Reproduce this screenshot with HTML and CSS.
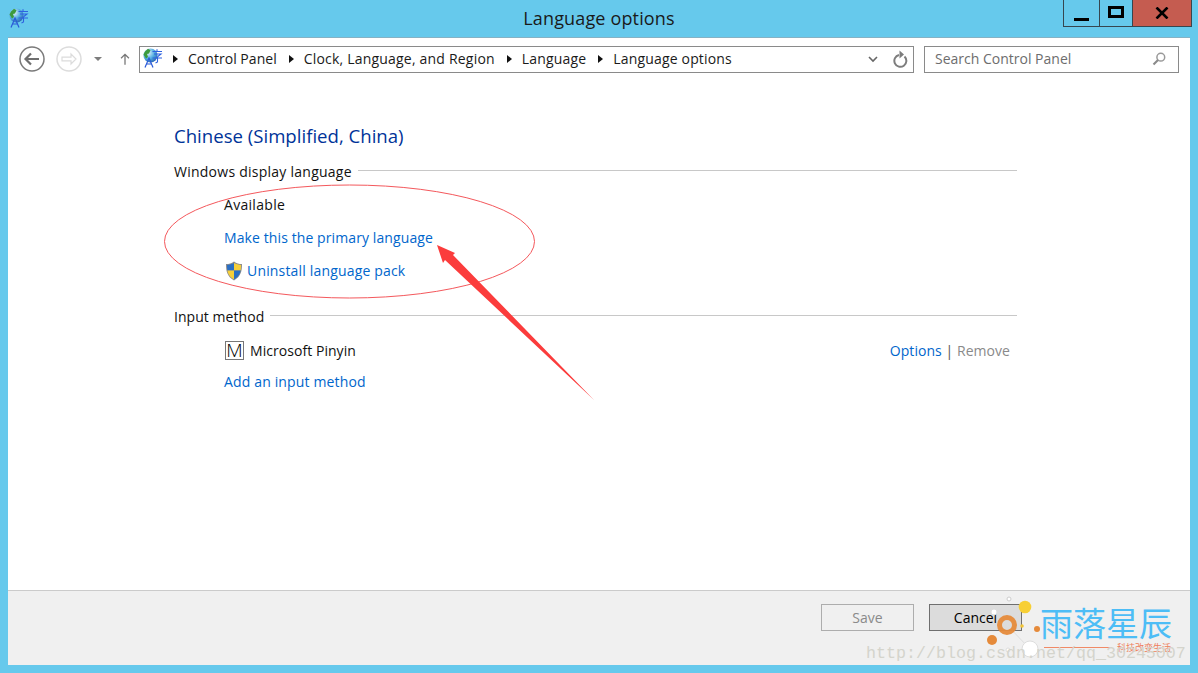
FILE: index.html
```html
<!DOCTYPE html>
<html lang="en">
<head>
<meta charset="utf-8">
<title>Language options</title>
<link rel="stylesheet" href="styles.css">
</head>
<body>
<svg class="defs" width="0" height="0" aria-hidden="true">
  <defs>
    <radialGradient id="globe" cx="35%" cy="30%" r="75%">
      <stop offset="0" stop-color="#e4f3fb"/>
      <stop offset=".55" stop-color="#54afe2"/>
      <stop offset="1" stop-color="#2a66b4"/>
    </radialGradient>
    <symbol id="langicon" viewBox="0 0 20 20">
      <circle cx="7.500" cy="7.500" r="7" fill="url(#globe)"/>
      <path d="M2 3.500l3-2.700 2.500 1.500-1.500 3.200-2 .5 1 3-2 1.500-2.500-4z" fill="#3d9b3d"/>
      <path d="M9.500 3.500h9.500M14 1.200v2.300M11 6h7l-3.500 2.700M9.500 10h9.500M14.500 8.800v5.200l-2 1" fill="none" stroke="#2f62e0" stroke-width="1.100"/>
      <path d="M2 19.500L6 10l4 9.500M3.500 16h5" fill="none" stroke="#2a5ad8" stroke-width="1.200"/>
    </symbol>
  </defs>
</svg>

<div class="window">
  <header class="titlebar">
    <svg class="title-icon" width="20" height="20"><use href="#langicon"/></svg>
    <h1 class="title">Language options</h1>
    <div class="caption">
      <div class="cap cap-min"><span class="min-glyph"></span></div>
      <div class="cap cap-max"><span class="max-glyph"></span></div>
      <div class="cap cap-close">
        <svg width="14" height="12" viewBox="0 0 14 12"><path d="M1.500 .5L12.500 11.500M12.500 .5L1.500 11.500" stroke="#000" stroke-width="2.600" fill="none"/></svg>
      </div>
    </div>
  </header>

  <div class="client">
    <nav class="navbar">
      <svg class="nav-btn" width="28" height="28" viewBox="0 0 28 28">
        <circle cx="14" cy="14" r="12" fill="none" stroke="#7a7a7a" stroke-width="1.500"/>
        <path d="M21 14H8M13 8.500L7.500 14l5.500 5.500" fill="none" stroke="#6f6f6f" stroke-width="2.200"/>
      </svg>
      <svg class="nav-btn nav-fwd" width="28" height="28" viewBox="0 0 28 28">
        <circle cx="14" cy="14" r="12" fill="none" stroke="#dcdcdc" stroke-width="1.500"/>
        <path d="M7 12.200h9V9l5 5-5 5v-3.200H7z" fill="none" stroke="#dcdcdc" stroke-width="1.200"/>
      </svg>
      <span class="nav-drop"></span>
      <svg class="nav-up" width="14" height="18" viewBox="0 0 14 18">
        <path d="M7 17V2.500M1.500 8L7 2.500 12.500 8" fill="none" stroke="#777" stroke-width="1.800"/>
      </svg>
      <div class="address">
        <svg class="addr-icon" width="20" height="20"><use href="#langicon"/></svg>
        <span class="crumb-arrow"></span><span class="crumb crumb-first">Control Panel</span>
        <span class="crumb-arrow"></span><span class="crumb crumb-wide">Clock, Language, and Region</span>
        <span class="crumb-arrow"></span><span class="crumb">Language</span>
        <span class="crumb-arrow"></span><span class="crumb">Language options</span>
        <svg class="addr-chev" width="10" height="7" viewBox="0 0 10 7"><path d="M1 1l4 4 4-4" fill="none" stroke="#666" stroke-width="1.600"/></svg>
        <svg class="addr-refresh" width="16" height="18" viewBox="0 0 16 18">
          <path d="M12.500 6.500A6 6 0 1 1 7 5" fill="none" stroke="#7d7d7d" stroke-width="2"/>
          <path d="M7.500 .5v8l4.500-4z" fill="#7d7d7d"/>
        </svg>
      </div>
      <div class="search">
        <span class="search-text">Search Control Panel</span>
        <svg width="14" height="14" viewBox="0 0 14 14">
          <circle cx="8.800" cy="5.200" r="3.900" fill="none" stroke="#999" stroke-width="1.500"/>
          <path d="M6 8L1.500 12.500" stroke="#8a8a8a" stroke-width="2.200"/>
        </svg>
      </div>
    </nav>

    <main class="main">
      <h2 class="lang-title">Chinese (Simplified, China)</h2>

      <div class="group-head group-display"><span>Windows display language</span><i class="rule"></i></div>
      <div class="indent">
        <div class="row-avail">Available</div>
        <div class="row-link"><a class="link">Make this the primary language</a></div>
        <div class="row-link row-shield">
          <svg width="18" height="20" viewBox="0 0 18 20">
            <path d="M9 .5c2.500 1.800 5 2.500 8 2.600 0 7-1 12.500-8 16.400C2 15.600 1 10.100 1 3.100 4 3 6.500 2.300 9 .5z" fill="#8c8c8c"/>
            <path d="M9 2v7.500h6.600c.3-1.700.4-3.700.4-5.500-2.700-.2-5-.9-7-2z" fill="#f6cf3a"/>
            <path d="M9 2C7 3.100 4.700 3.800 2 4c0 1.800.1 3.800.4 5.500H9z" fill="#2a6fc4"/>
            <path d="M2.400 9.500C3 13 4.600 16 9 18.300V9.500z" fill="#f6cf3a"/>
            <path d="M9 9.500v8.800c4.400-2.300 6-5.300 6.600-8.800z" fill="#2a6fc4"/>
          </svg>
          <a class="link">Uninstall language pack</a>
        </div>
      </div>

      <div class="group-head group-input"><span>Input method</span><i class="rule"></i></div>
      <div class="indent">
        <div class="row-method">
          <span class="ime">M</span>
          <span class="ime-name">Microsoft Pinyin</span>
          <span class="ime-actions"><a class="link">Options</a> <b class="sep">|</b> <span class="muted">Remove</span></span>
        </div>
        <div class="row-add"><a class="link">Add an input method</a></div>
      </div>
    </main>

    <footer class="footer">
      <button class="btn btn-save" type="button">Save</button>
      <button class="btn btn-cancel" type="button">Cancel</button>
    </footer>
  </div>
</div>

<svg class="annotation" width="440" height="230" viewBox="160 180 440 230" aria-hidden="true">
  <ellipse cx="349.500" cy="241.500" rx="185" ry="56.500" fill="none" stroke="#f4585c" stroke-width="1"/>
  <path d="M437 245L455 253 453 255 594 400 445 260 443 263z" fill="#fb3c3c"/>
</svg>

<div class="watermark" aria-hidden="true">
  <svg class="wm-dots" width="80" height="72" viewBox="0 0 80 72">
    <path d="M25 32L43 14M25 32L48 56" stroke="#ddd" stroke-width="1" fill="none"/>
    <circle cx="43" cy="14" r="6.300" fill="#f7cf35"/>
    <circle cx="27" cy="6" r="2" fill="#fff" stroke="#ccc"/>
    <circle cx="12" cy="19" r="3" fill="#fff" stroke="#ddd"/>
    <circle cx="25" cy="32" r="7.500" fill="none" stroke="#e58a3a" stroke-width="5" opacity=".95"/>
    <circle cx="10" cy="47" r="5" fill="#e58a3a"/>
    <circle cx="40" cy="33" r="1.800" fill="#f2c536"/>
    <circle cx="55" cy="36" r="3" fill="#e58a3a"/>
    <circle cx="48" cy="56" r="8" fill="#fff" stroke="#ddd"/>
    <circle cx="26" cy="57" r="2" fill="#fff" stroke="#ddd"/>
  </svg>
  <span class="wm-brand">雨落星辰</span>
  <span class="wm-line"></span>
  <span class="wm-slogan">科技改变生活</span>
  <span class="wm-url">http://blog.csdn.net/qq_30245007</span>
</div>
</body>
</html>
```
FILE: styles.css
```css
* { box-sizing: border-box; }
html, body { margin: 0; padding: 0; height: 100%; overflow: hidden; }
body {
  position: relative;
  background: #66c9ec;
  font-family: "Open Sans", "Noto Sans", sans-serif;
  font-size: 14px;
  color: #000;
}
.defs { position: absolute; }
.window { display: flex; flex-direction: column; height: 673px; padding: 0 8px 8px; }

.titlebar { position: relative; flex: 0 0 37px; display: flex; justify-content: center; }
.title-icon { position: absolute; left: 1px; top: 8px; }
.title { margin: 0; font-size: 18px; font-weight: 400; letter-spacing: .15px; line-height: 37px; color: #1a1a1a; }
.caption { position: absolute; right: -2px; top: 0; display: flex; height: 27px; border: 1px solid #36464f; border-top: 0; }
.cap { display: flex; align-items: center; justify-content: center; }
.cap-min { width: 36px; border-right: 1px solid #36464f; }
.cap-max { width: 33px; border-right: 1px solid #36464f; }
.cap-close { width: 58px; background: #c55c50; }
.min-glyph { width: 15px; height: 3px; background: #000; margin-top: 12px; }
.max-glyph { width: 16px; height: 12px; border: 3px solid #000; margin-top: -2px; }

.client { flex: 1; min-height: 0; display: flex; flex-direction: column; background: #fff; border-top: 1px solid #86b2c4; }

.navbar { flex: 0 0 34px; display: flex; align-items: center; padding: 7px 11px 0 10px; }
.nav-btn { flex: none; }
.nav-fwd { margin-left: 9px; }
.nav-drop { margin-left: 11px; width: 0; height: 0; border: 4px solid transparent; border-top-color: #7d7d7d; border-bottom: 0; }
.nav-up { margin-left: 18px; margin-right: 9px; }
.address {
  width: 775px; height: 27px; flex: none; display: flex; align-items: center;
  border: 1px solid #8a8a8a; padding: 0 4px 0 3px;
}
.addr-icon { margin-right: 10px; margin-top: -2px; }
.crumb-arrow { width: 0; height: 0; border: 4.500px solid transparent; border-left: 5px solid #111; border-right: 0; margin-right: 10px; }
.crumb { margin-right: 12px; padding-bottom: 2px; letter-spacing: .17px; white-space: nowrap; color: #1a1a1a; }
.crumb-first { letter-spacing: .03px; }
.crumb-wide { letter-spacing: .2px; }
.addr-chev { margin-left: auto; margin-right: 14px; }
.addr-refresh { margin-right: 1px; }
.search {
  width: 255px; height: 27px; flex: none; margin-left: 10px; display: flex; align-items: center;
  justify-content: space-between; border: 1px solid #8a8a8a; padding: 0 12px 0 10px; color: #6d6d6d;
}
.search-text { padding-bottom: 2px; }

.main { flex: 1; min-height: 0; padding: 29px 173px 0 166px; }
.lang-title { margin: 0; padding-top: 19px; font-size: 18.600px; font-weight: 400; line-height: 30px; color: #003399; }
.group-head { display: flex; align-items: center; gap: 6px; height: 24px; color: #111; }
.group-display { margin-top: 8px; letter-spacing: .25px; }
.group-input { margin-top: 17px; letter-spacing: .05px; }
.group-head span { white-space: nowrap; }
.rule { flex: 1; height: 1px; background: #c8c8c8; margin-top: -1px; }
.indent { padding-left: 50px; }
.row-avail { height: 33px; line-height: 33px; margin-top: 5px; letter-spacing: .3px; color: #111; }
.row-link { height: 33px; line-height: 33px; letter-spacing: .1px; }
.row-shield { display: flex; align-items: center; gap: 4px; padding-left: 1px; letter-spacing: .17px; }
.row-shield svg { flex: none; }
.link { color: #0066cc; white-space: nowrap; }
.row-method { display: flex; align-items: center; height: 30px; margin-top: 7px; padding-right: 7px; }
.ime {
  width: 19px; height: 19px; flex: none; border: 1px solid #777; margin-left: 1px; margin-right: 6px;
  display: flex; align-items: center; justify-content: center; font-size: 19px; font-weight: 300; line-height: 1; color: #000;
}
.ime-name { color: #111; letter-spacing: .05px; }
.ime-actions { margin-left: auto; letter-spacing: .05px; }
.sep { font-weight: 400; color: #555; }
.muted { color: #8a8a8a; }
.row-add { height: 30px; line-height: 30px; margin-top: 2px; letter-spacing: .15px; }

.footer {
  flex: 0 0 75px; display: flex; justify-content: flex-end; gap: 15px; align-items: flex-start;
  padding: 13px 168px 0 0; background: #f0f0f0; border-top: 1px solid #cbcbcb;
}
.btn { width: 93px; height: 27px; font: inherit; padding: 0; background: #f0f0f0; }
.btn-save { border: 1px solid #adadad; color: #8a8a8a; }
.btn-cancel { border: 1px solid #6f6f6f; background: #dcdcdc; color: #000; }

.annotation { position: absolute; left: 160px; top: 180px; pointer-events: none; }

.watermark { position: absolute; left: 0; top: 0; width: 1198px; height: 673px; pointer-events: none; }
.wm-dots { position: absolute; left: 982px; top: 593px; }
.wm-brand { position: absolute; left: 1040px; top: 600px; font-family: "Noto Sans CJK SC", sans-serif; font-weight: 400; font-size: 33px; line-height: 44px; color: #4dbdf6; white-space: nowrap; }
.wm-line { position: absolute; left: 1044px; top: 647px; width: 68px; height: 1px; background: #f08a66; }
.wm-slogan { position: absolute; left: 1117px; top: 641px; font-family: "Noto Sans CJK SC", sans-serif; font-size: 9px; line-height: 13px; color: #ee7f5c; white-space: nowrap; }
.wm-url { position: absolute; left: 866px; top: 644px; font-family: "Liberation Mono", monospace; font-size: 16.670px; line-height: 20px; color: #d4d4cc; white-space: nowrap; }
```
